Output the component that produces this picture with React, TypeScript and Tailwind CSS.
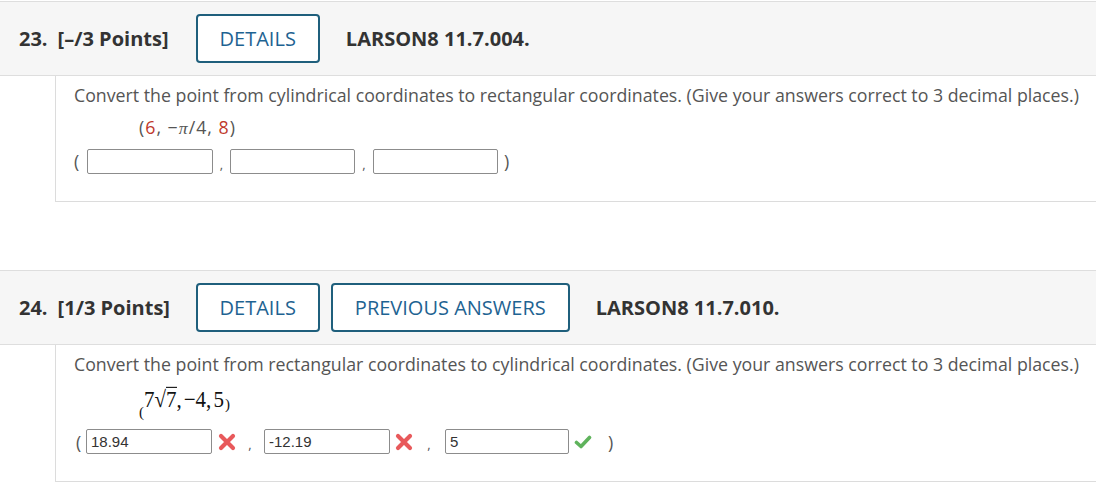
const font = { fontFamily: '"Open Sans", "Liberation Sans", sans-serif' };

const CrossIcon = () => (
  <svg width="18" height="18" viewBox="0 0 18 18" className="shrink-0">
    <path d="M3 3 L15 15 M15 3 L3 15" stroke="#e8595b" strokeWidth="4.2" strokeLinecap="round" />
  </svg>
);

const CheckIcon = () => (
  <svg width="18" height="16" viewBox="0 0 18 16" className="shrink-0">
    <path d="M2.5 8.5 L7 12.5 L15.5 3.5" stroke="#5fb35c" strokeWidth="3.6" strokeLinecap="round" strokeLinejoin="round" fill="none" />
  </svg>
);

const Button = ({ label }: { label: string }) => (
  <div className="h-[49px] px-[22px] border-2 border-[#1f5f7c] rounded-[4px] flex items-center text-[20px] text-[#1e6392] bg-white">
    {label}
  </div>
);

const Header = ({ num, points, code, prev }: { num: string; points: string; code: string; prev?: boolean }) => (
  <div className="h-[75px] bg-[#f6f6f6] border-y border-[#dedede] flex items-center pl-[19px] text-[20px] text-[#333]">
    <span className="font-bold">{num}</span>
    <span className="font-bold ml-[10px] w-[138px]">{points}</span>
    <div className="flex gap-[11px]">
      <Button label="DETAILS" />
      {prev && <Button label="PREVIOUS ANSWERS" />}
    </div>
    <span className="font-bold ml-[26px]">{code}</span>
  </div>
);

const Box = ({ value, w = 126 }: { value?: string; w?: number }) => (
  <div
    className="h-[25px] border border-[#8c8c8c] rounded-[2px] bg-white flex items-center pl-[4px] text-[15px] text-[#333]"
    style={{ width: w, fontFamily: '"Liberation Sans", Arial, sans-serif' }}
  >
    {value}
  </div>
);

export default function App() {
  return (
    <div className="w-[1096px] h-[482px] bg-white overflow-hidden pt-[1px]" style={font}>
      <Header num="23." points="[–/3 Points]" code="LARSON8 11.7.004." />
      <div className="ml-[55px] h-[126px] border-l border-b border-[#dcdcdc] pl-[18px] pt-[6px] text-[17.75px] text-[#555]">
        <p>Convert the point from cylindrical coordinates to rectangular coordinates. (Give your answers correct to 3 decimal places.)</p>
        <p className="ml-[65px] mt-[5px] tracking-[1px]">
          (<span className="text-[#c0392b]">6</span>, −<span className="italic" style={{ fontFamily: '"Liberation Serif", serif' }}>π</span>/4, <span className="text-[#c0392b]">8</span>)
        </p>
        <div className="flex items-center mt-[7px] text-[#555]">
          <span className="w-[13px]">(</span>
          <Box />
          <span className="w-[17px] text-center text-[13px] pt-[6px]">,</span>
          <Box w={125} />
          <span className="w-[18px] text-center text-[13px] pt-[6px]">,</span>
          <Box w={125} />
          <span className="ml-[6px]">)</span>
        </div>
      </div>

      <div className="h-[68px]" />

      <Header num="24." points="[1/3 Points]" code="LARSON8 11.7.010." prev />
      <div className="ml-[55px] h-[137px] border-l border-b border-[#dcdcdc] pl-[18px] pt-[6px] text-[17.75px] text-[#555]">
        <p>Convert the point from rectangular coordinates to cylindrical coordinates. (Give your answers correct to 3 decimal places.)</p>
        <p className="ml-[65px] mt-[4px] h-[38px] text-[#111] text-[21px] flex items-start" style={{ fontFamily: '"Liberation Serif", "Times New Roman", serif' }}>
          <span className="text-[15px] mt-[19px]">(</span>
          <span className="mt-[2px] scale-y-110">
            7√<span className="border-t border-[#111] leading-[21px] inline-block">7</span>,<span className="ml-[2px]">−4,</span><span className="ml-[2px]">5</span>
          </span>
          <span className="text-[15px] mt-[11px] ml-[1px]">)</span>
        </p>
        <div className="flex items-center mt-[9px]">
          <span className="w-[12px] pl-[2px]">(</span>
          <Box value="18.94" />
          <span className="ml-[6px]"><CrossIcon /></span>
          <span className="w-[28px] text-center text-[13px] pt-[6px]">,</span>
          <Box value="-12.19" />
          <span className="ml-[5px]"><CrossIcon /></span>
          <span className="w-[32px] text-center text-[13px] pt-[6px]">,</span>
          <Box value="5" w={124} />
          <span className="ml-[5px]"><CheckIcon /></span>
          <span className="ml-[16px]">)</span>
        </div>
      </div>
    </div>
  );
}
